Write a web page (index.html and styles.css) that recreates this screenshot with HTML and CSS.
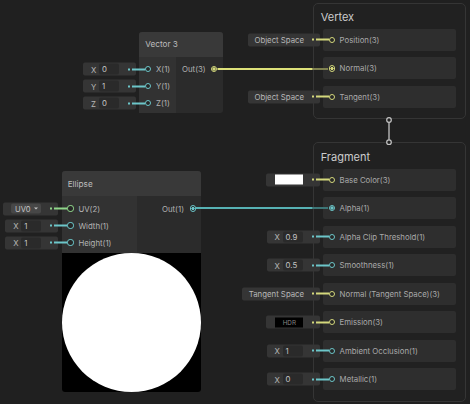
FILE: index.html
```html
<!DOCTYPE html>
<html>
<head>
<meta charset="utf-8">
<link rel="stylesheet" href="styles.css">
</head>
<body>
<div class="canvas">
  <div class="node vec3">
    <div class="node-head">Vector 3</div>
    <div class="node-body">
      <div class="node-in">
        <div class="nrow t1"><span class="field num"><span class="lab">X</span><span class="val">0</span><i class="dot"></i></span><span class="port"></span>X(1)</div>
        <div class="nrow t1"><span class="field num"><span class="lab">Y</span><span class="val">1</span><i class="dot"></i></span><span class="port"></span>Y(1)</div>
        <div class="nrow t1"><span class="field num"><span class="lab">Z</span><span class="val">0</span><i class="dot"></i></span><span class="port"></span>Z(1)</div>
      </div>
      <div class="node-out">
        <div class="nrow out t3">Out(3)<span class="port on"></span></div>
      </div>
    </div>
  </div>

  <div class="node ellipse">
    <div class="node-head">Ellipse</div>
    <div class="node-body">
      <div class="node-in">
        <div class="nrow t2"><span class="field uv"><span class="dd">UV0<i class="caret"></i></span><i class="dot"></i></span><span class="port"></span>UV(2)</div>
        <div class="nrow t1"><span class="field num"><span class="lab">X</span><span class="val">1</span><i class="dot"></i></span><span class="port"></span>Width(1)</div>
        <div class="nrow t1"><span class="field num"><span class="lab">X</span><span class="val">1</span><i class="dot"></i></span><span class="port"></span>Height(1)</div>
      </div>
      <div class="node-out">
        <div class="nrow out t1">Out(1)<span class="port on"></span></div>
      </div>
    </div>
    <div class="preview"><div class="circle"></div></div>
  </div>

  <div class="block vertex">
    <div class="block-title">Vertex</div>
    <div class="block-rows">
      <div class="brow t3"><span class="field txt">Object Space<i class="dot"></i></span><span class="port"></span>Position(3)</div>
      <div class="brow t3"><span class="port on"></span>Normal(3)</div>
      <div class="brow t3"><span class="field txt">Object Space<i class="dot"></i></span><span class="port"></span>Tangent(3)</div>
    </div>
  </div>

  <div class="block fragment">
    <div class="block-title">Fragment</div>
    <div class="block-rows">
      <div class="brow t3"><span class="field col"><span class="sw"></span><i class="dot"></i></span><span class="port"></span>Base Color(3)</div>
      <div class="brow t1"><span class="port on"></span>Alpha(1)</div>
      <div class="brow t1"><span class="field num"><span class="lab">X</span><span class="val">0.9</span><i class="dot"></i></span><span class="port"></span>Alpha Clip Threshold(1)</div>
      <div class="brow t1"><span class="field num"><span class="lab">X</span><span class="val">0.5</span><i class="dot"></i></span><span class="port"></span>Smoothness(1)</div>
      <div class="brow t3"><span class="field txt">Tangent Space<i class="dot"></i></span><span class="port"></span>Normal (Tangent Space)(3)</div>
      <div class="brow t3"><span class="field col hdr"><span class="sw">HDR</span><i class="dot"></i></span><span class="port"></span>Emission(3)</div>
      <div class="brow t1"><span class="field num"><span class="lab">X</span><span class="val">1</span><i class="dot"></i></span><span class="port"></span>Ambient Occlusion(1)</div>
      <div class="brow t1"><span class="field num"><span class="lab">X</span><span class="val">0</span><i class="dot"></i></span><span class="port"></span>Metallic(1)</div>
    </div>
  </div>

  <svg class="wires" width="470" height="404" viewBox="0 0 470 404">
    <line x1="217.5" y1="69" x2="312.7" y2="69" stroke="#dde17a" stroke-width="2"/>
    <line x1="312.7" y1="69" x2="328" y2="69" stroke="#7f8150" stroke-width="2"/>
    <line x1="195.5" y1="208" x2="312.7" y2="208" stroke="#57b2b4" stroke-width="2"/>
    <line x1="312.7" y1="208" x2="328" y2="208" stroke="#3d7576" stroke-width="2"/>
    <line x1="389" y1="122.3" x2="389" y2="139.8" stroke="#c4c4c4" stroke-width="1.3"/>
    <circle cx="389" cy="120" r="2.3" fill="#222" stroke="#c4c4c4" stroke-width="1.2"/>
    <circle cx="389" cy="142.2" r="2.3" fill="#222" stroke="#c4c4c4" stroke-width="1.2"/>
  </svg>
</div>
</body>
</html>
```

FILE: styles.css
```css
* { box-sizing: border-box; margin: 0; padding: 0; }
html, body { width: 470px; height: 404px; overflow: hidden; background: #202020; }
body { font-family: Inter, "Noto Sans", sans-serif; font-size: 7.8px; color: #b4b4b4; }

.canvas { position: relative; width: 470px; height: 404px; }

.t1 { --c: #6cc6c9; }
.t2 { --c: #8fd68a; }
.t3 { --c: #d4d87c; }

/* nodes */
.node { position: absolute; background: #2b2b2b; border-radius: 3px; }
.vec3 { left: 139.3px; top: 32px; width: 83.4px; }
.ellipse { left: 61.7px; top: 171px; width: 139.3px; }

.node-head {
  height: 24.6px; background: #393939; border-radius: 3px 3px 0 0;
  display: flex; align-items: center; padding-left: 6px;
  font-size: 8.2px; color: #bdbdbd;
}
.ellipse .node-head { height: 25px; }
.node-body { display: flex; }
.node-in { background: #323232; padding: 4px 0 1.5px; }
.node-out { flex: 1; padding: 4px 0 1.5px; }
.vec3 .node-in { width: 37px; }
.ellipse .node-in { width: 75px; }
.ellipse .node-in, .ellipse .node-out { padding-bottom: 1.7px; }

.nrow {
  position: relative; height: 17px; display: flex; align-items: center;
  padding-left: 16.7px; white-space: nowrap; color: #b2b2b2;
}
.nrow.out { justify-content: flex-end; padding: 0 17px 0 0; }

.preview {
  height: 139.6px; background: #000; border-radius: 0 0 3px 3px;
  display: flex; align-items: center; justify-content: center;
}
.circle { width: 139px; height: 139px; border-radius: 50%; background: #fff; }

/* ports */
.port {
  position: absolute; left: 5.7px; top: 50%; width: 6.2px; height: 6.2px; margin-top: -3.1px;
  border-radius: 50%; border: 1.2px solid var(--c); background: #262626;
}
.out .port { left: auto; right: 5.3px; }
.port.on { background: radial-gradient(circle, var(--c) 0 1.4px, #262626 1.8px); }

/* blocks */
.block {
  position: absolute; left: 313px; width: 153px;
  border: 1px solid #353535; border-radius: 5px;
  background: rgba(33, 33, 33, 0.5); padding: 0 9px;
}
.vertex { top: 2.7px; height: 116.3px; }
.fragment { top: 142.3px; height: 259.4px; }
.block-title {
  height: 25.3px; padding-top: 2px; margin-left: -2.3px; display: flex; align-items: center;
  font-size: 11px; color: #cccccc;
}
.block-rows { display: flex; flex-direction: column; gap: 6.5px; }
.brow {
  position: relative; height: 22px; background: #2e2e2e; border-radius: 2px;
  display: flex; align-items: center; padding-left: 16.6px;
  color: #a9a9a9; white-space: nowrap;
}

/* input fields */
.field {
  position: absolute; right: calc(100% + 3.4px); top: 50%; transform: translateY(-50%);
  height: 13px; background: #353535; border-radius: 2px;
  display: flex; align-items: center; color: #bdbdbd; white-space: nowrap;
}
.field::after {
  content: ""; position: absolute; left: calc(100% - 4px); top: 50%;
  width: 13.2px; height: 2px; margin-top: -1px; background: var(--c);
}
.dot {
  position: absolute; right: 6px; top: 50%; width: 2px; height: 2px; margin-top: -1px;
  background: var(--c);
}
.num { width: 53px; padding-left: 8px; }
.lab { width: 8px; color: #b8b8b8; }
.val {
  width: 20px; height: 11px; background: #2a2a2a; border-radius: 2px;
  padding-left: 3px; line-height: 11px; color: #c4c4c4;
}
.txt { padding: 0 15.5px 0 6.6px; color: #b8b8b8; }
.col { width: 53.6px; padding-left: 9.3px; }
.sw { width: 28px; height: 10px; background: #fff; }
.hdr .sw {
  background: #000; color: #858585; font-size: 6.3px;
  display: flex; align-items: center; justify-content: center;
}
.uv { width: 55px; padding-left: 7.7px; }
.dd {
  width: 30px; height: 9.5px; background: #474747; border-radius: 2px;
  display: flex; align-items: center; padding-left: 4px; gap: 3px;
  color: #c4c4c4; font-size: 7.6px;
}
.caret {
  width: 0; height: 0; border-left: 2.2px solid transparent; border-right: 2.2px solid transparent;
  border-top: 2.4px solid #c4c4c4;
}

.wires { position: absolute; left: 0; top: 0; pointer-events: none; }
```
